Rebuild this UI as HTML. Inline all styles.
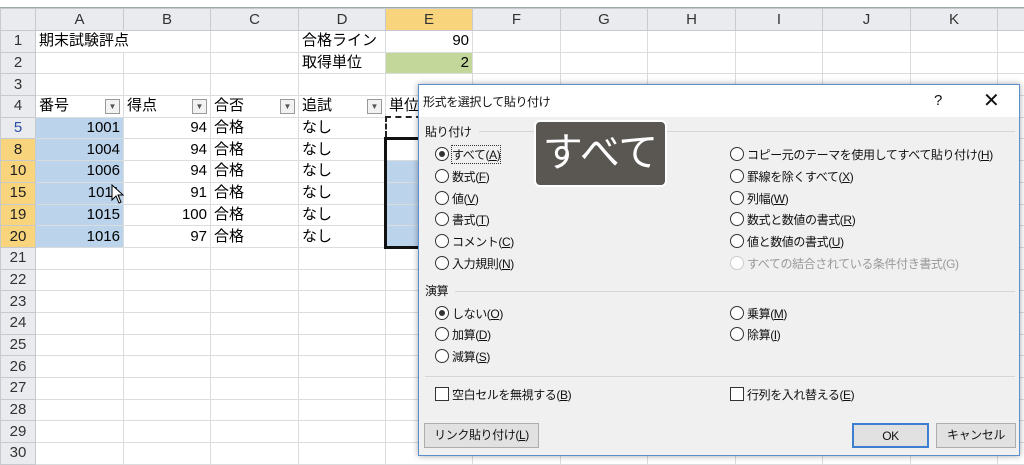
<!DOCTYPE html>
<html><head><meta charset="utf-8"><style>
*{margin:0;padding:0;box-sizing:border-box}
body{width:1024px;height:464px;overflow:hidden;background:#fff;font-family:"Liberation Sans","Noto Sans CJK JP",sans-serif;position:relative}
#top{position:absolute;left:0;top:0;width:1024px;height:8px;background:#fff;border-bottom:1px solid #9aa}
table{position:absolute;left:0;top:8px;border-collapse:collapse;table-layout:fixed;width:1037px}
td{border:1px solid #dadcdd;height:21.7px;font-size:15px;padding:0 3px;white-space:nowrap;overflow:hidden;line-height:20px}
td.h{background:#e9ebee;color:#333;text-align:center;font-size:15px;border-color:#c6c9ce}
tr.ch td{background:#e9ebee;text-align:center;color:#333;height:22px;border-color:#c6c9ce}
td.sel{background:#f8d47d!important;color:#222}
td.rh5{color:#2a4fa8}
td.b{background:#bcd3ec}
td.r{text-align:right}
td.g{background:#c4d79b}
.fb{float:right;width:15px;height:15px;border:1px solid #999;background:#f2f2f2;margin-top:3px;font-size:8px;line-height:13px;text-align:center;color:#555}
#dlg{position:absolute;left:418px;top:84px;width:602px;height:372px;background:#f0f0f0;border:1px solid #5b8fd0;box-shadow:0 0 6px rgba(0,0,0,.35);font-size:12px;letter-spacing:-0.4px;color:#111}
#dlg .t{position:absolute;left:0;top:0;width:100%;height:32px;background:#fff}
.a{position:absolute;white-space:nowrap}
.rd{position:absolute;width:14px;height:14px;border:1px solid #333;border-radius:50%;background:#fff}
.rd.on::after{content:"";position:absolute;left:3px;top:3px;width:6px;height:6px;border-radius:50%;background:#333}
.cb{position:absolute;width:14px;height:14px;border:1px solid #333;background:#fff}
.ln{position:absolute;height:1px;background:#d5d5d5}
.btn{position:absolute;height:25px;border:1px solid #adadad;background:#e1e1e1;text-align:center;line-height:23px;font-size:12px}
#ov{position:absolute;left:534px;top:120px;width:133px;height:67px;background:#5a5752;border:2px solid #fff;border-radius:6px;color:#fff;font-size:40px;text-align:center;line-height:62px}
</style></head><body>
<div id="top"></div>
<table>
<colgroup><col style="width:35px"><col style="width:88px"><col style="width:87px"><col style="width:88px"><col style="width:87px"><col style="width:87px"><col style="width:88px"><col style="width:87px"><col style="width:88px"><col style="width:87px"><col style="width:88px"><col style="width:87px"><col style="width:40px"></colgroup>
<tr class="ch"><td></td><td>A</td><td>B</td><td>C</td><td>D</td><td class="sel">E</td><td>F</td><td>G</td><td>H</td><td>I</td><td>J</td><td>K</td><td></td></tr>
<tr><td class="h">1</td><td style="overflow:visible;border-right-color:transparent">期末試験評点</td><td></td><td></td><td>合格ライン</td><td class="r">90</td><td></td><td></td><td></td><td></td><td></td><td></td><td></td></tr>
<tr><td class="h">2</td><td></td><td></td><td></td><td>取得単位</td><td class="r g">2</td><td></td><td></td><td></td><td></td><td></td><td></td><td></td></tr>
<tr><td class="h">3</td><td></td><td></td><td></td><td></td><td></td><td></td><td></td><td></td><td></td><td></td><td></td><td></td></tr>
<tr><td class="h">4</td><td>番号<span class="fb">▼</span></td><td>得点<span class="fb">▼</span></td><td>合否<span class="fb">▼</span></td><td>追試<span class="fb">▼</span></td><td>単位</td><td></td><td></td><td></td><td></td><td></td><td></td><td></td></tr>
<tr><td class="h rh5">5</td><td class="b r">1001</td><td class="r">94</td><td>合格</td><td>なし</td><td style="border:2px dashed #222"></td><td></td><td></td><td></td><td></td><td></td><td></td><td></td></tr>
<tr><td class="h sel">8</td><td class="b r">1004</td><td class="r">94</td><td>合格</td><td>なし</td><td style="border:3px solid #111;border-bottom:none"></td><td></td><td></td><td></td><td></td><td></td><td></td><td></td></tr>
<tr><td class="h sel">10</td><td class="b r">1006</td><td class="r">94</td><td>合格</td><td>なし</td><td class="b" style="border-left:3px solid #111"></td><td></td><td></td><td></td><td></td><td></td><td></td><td></td></tr>
<tr><td class="h sel">15</td><td class="b r">1011</td><td class="r">91</td><td>合格</td><td>なし</td><td class="b" style="border-left:3px solid #111"></td><td></td><td></td><td></td><td></td><td></td><td></td><td></td></tr>
<tr><td class="h sel">19</td><td class="b r">1015</td><td class="r">100</td><td>合格</td><td>なし</td><td class="b" style="border-left:3px solid #111"></td><td></td><td></td><td></td><td></td><td></td><td></td><td></td></tr>
<tr><td class="h sel">20</td><td class="b r">1016</td><td class="r">97</td><td>合格</td><td>なし</td><td class="b" style="border-left:3px solid #111;border-bottom:3px solid #111"></td><td></td><td></td><td></td><td></td><td></td><td></td><td></td></tr>
<tr><td class="h">21</td><td></td><td></td><td></td><td></td><td></td><td></td><td></td><td></td><td></td><td></td><td></td><td></td></tr>
<tr><td class="h">22</td><td></td><td></td><td></td><td></td><td></td><td></td><td></td><td></td><td></td><td></td><td></td><td></td></tr>
<tr><td class="h">23</td><td></td><td></td><td></td><td></td><td></td><td></td><td></td><td></td><td></td><td></td><td></td><td></td></tr>
<tr><td class="h">24</td><td></td><td></td><td></td><td></td><td></td><td></td><td></td><td></td><td></td><td></td><td></td><td></td></tr>
<tr><td class="h">25</td><td></td><td></td><td></td><td></td><td></td><td></td><td></td><td></td><td></td><td></td><td></td><td></td></tr>
<tr><td class="h">26</td><td></td><td></td><td></td><td></td><td></td><td></td><td></td><td></td><td></td><td></td><td></td><td></td></tr>
<tr><td class="h">27</td><td></td><td></td><td></td><td></td><td></td><td></td><td></td><td></td><td></td><td></td><td></td><td></td></tr>
<tr><td class="h">28</td><td></td><td></td><td></td><td></td><td></td><td></td><td></td><td></td><td></td><td></td><td></td><td></td></tr>
<tr><td class="h">29</td><td></td><td></td><td></td><td></td><td></td><td></td><td></td><td></td><td></td><td></td><td></td><td></td></tr>
<tr><td class="h">30</td><td></td><td></td><td></td><td></td><td></td><td></td><td></td><td></td><td></td><td></td><td></td><td></td></tr>
</table>
<svg style="position:absolute;left:111px;top:184px" width="14" height="20" viewBox="0 0 14 20"><path d="M1 1 L1 16 L5 12 L8 19 L10 18 L7 11 L12 11 Z" fill="#fff" stroke="#000" stroke-width="1"/></svg>
<div id="dlg">
<div class="t"></div>
<div class="a" style="left:4px;top:8px">形式を選択して貼り付け</div>
<div class="a" style="left:515px;top:7px;font-size:15px">?</div>
<div class="a" style="left:564px;top:3px;font-size:20px">✕</div>
<div class="a" style="left:6px;top:38px">貼り付け</div><div class="ln" style="left:60px;top:46px;width:536px"></div>
<div class="rd on" style="left:16px;top:62px"></div><div class="a" style="left:33px;top:61px;outline:1px dotted #333">すべて(<u>A</u>)</div>
<div class="rd" style="left:16px;top:84px"></div><div class="a" style="left:33px;top:83px">数式(<u>F</u>)</div>
<div class="rd" style="left:16px;top:106px"></div><div class="a" style="left:33px;top:105px">値(<u>V</u>)</div>
<div class="rd" style="left:16px;top:127px"></div><div class="a" style="left:33px;top:126px">書式(<u>T</u>)</div>
<div class="rd" style="left:16px;top:149px"></div><div class="a" style="left:33px;top:148px">コメント(<u>C</u>)</div>
<div class="rd" style="left:16px;top:171px"></div><div class="a" style="left:33px;top:170px">入力規則(<u>N</u>)</div>
<div class="rd" style="left:311px;top:62px"></div><div class="a" style="left:328px;top:61px">コピー元のテーマを使用してすべて貼り付け(<u>H</u>)</div>
<div class="rd" style="left:311px;top:84px"></div><div class="a" style="left:328px;top:83px">罫線を除くすべて(<u>X</u>)</div>
<div class="rd" style="left:311px;top:106px"></div><div class="a" style="left:328px;top:105px">列幅(<u>W</u>)</div>
<div class="rd" style="left:311px;top:127px"></div><div class="a" style="left:328px;top:126px">数式と数値の書式(<u>R</u>)</div>
<div class="rd" style="left:311px;top:149px"></div><div class="a" style="left:328px;top:148px">値と数値の書式(<u>U</u>)</div>
<div class="rd" style="left:311px;top:171px;border-color:#ccc"></div><div class="a" style="left:328px;top:170px;color:#999">すべての結合されている条件付き書式(G)</div>
<div class="a" style="left:6px;top:197px">演算</div><div class="ln" style="left:36px;top:206px;width:560px"></div>
<div class="rd on" style="left:16px;top:221px"></div><div class="a" style="left:33px;top:220px">しない(<u>O</u>)</div>
<div class="rd" style="left:16px;top:242px"></div><div class="a" style="left:33px;top:241px">加算(<u>D</u>)</div>
<div class="rd" style="left:16px;top:264px"></div><div class="a" style="left:33px;top:263px">減算(<u>S</u>)</div>
<div class="rd" style="left:311px;top:221px"></div><div class="a" style="left:328px;top:220px">乗算(<u>M</u>)</div>
<div class="rd" style="left:311px;top:242px"></div><div class="a" style="left:328px;top:241px">除算(<u>I</u>)</div>
<div class="ln" style="left:6px;top:291px;width:590px"></div>
<div class="cb" style="left:16px;top:302px"></div><div class="a" style="left:33px;top:301px">空白セルを無視する(<u>B</u>)</div>
<div class="cb" style="left:311px;top:302px"></div><div class="a" style="left:328px;top:301px">行列を入れ替える(<u>E</u>)</div>
<div class="btn" style="left:5px;top:338px;width:115px">リンク貼り付け(<u>L</u>)</div>
<div class="btn" style="left:433px;top:338px;width:77px;border:2px solid #3c7fd0">OK</div>
<div class="btn" style="left:517px;top:338px;width:80px">キャンセル</div>
</div>
<div id="ov">すべて</div>
</body></html>
